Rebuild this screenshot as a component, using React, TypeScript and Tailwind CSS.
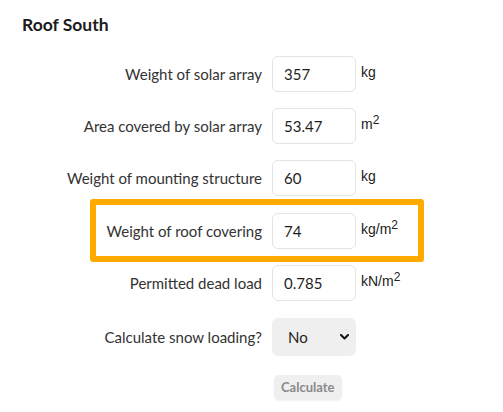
const font = { fontFamily: "Lato, 'Open Sans', sans-serif" }

interface RowProps {
    label: string
    value: string
    unit: JSX.Element | string
    labelWidth?: string
}

const Unit = ({ base, sup }: { base: string, sup?: string }) => {
    return (
        <span className="text-[14px] text-[#222] font-['Liberation_Sans',Arial,sans-serif] leading-none">
            {base}
            {sup && <sup className="text-[12px] relative -top-[5px]">{sup}</sup>}
        </span>
    )
}

const Row = ({ label, value, unit, labelWidth = "w-[240px]" }: RowProps) => {
    return (
        <div className="flex items-center">
            <label className={`${labelWidth} shrink-0 text-right text-[15px] text-[#333]`}>{label}</label>
            <input
                readOnly
                value={value}
                className="ml-[10px] w-[84px] h-[36px] rounded-[6px] border border-[#e3e3e3] bg-white px-[11px] text-[15px] text-[#1e1e1e] outline-none"
                style={font}
            />
            <div className="ml-[5px] -mt-[6px]">{unit}</div>
        </div>
    )
}

export default function App() {
    return (
        <div className="w-[503px] h-[412px] bg-white pl-[22px] overflow-hidden" style={font}>
            <h2 className="pt-[13px] text-[17.5px] leading-[24px] font-bold text-[#1b1b1b]">Roof South</h2>

            <div className="flex flex-col">
                <div className="mt-[19px]">
                    <Row label="Weight of solar array" value="357" unit={<Unit base="kg" />} />
                </div>
                <div className="mt-4">
                    <Row label="Area covered by solar array" value="53.47" unit={<Unit base="m" sup="2" />} />
                </div>
                <div className="mt-4">
                    <Row label="Weight of mounting structure" value="60" unit={<Unit base="kg" />} />
                </div>
                <div className="mt-[3px] ml-[68px] w-[334px] border-[6px] border-[#ffaa00] rounded-[3px] pt-[8px] pb-[7px]">
                    <Row label="Weight of roof covering" value="74" unit={<Unit base="kg/m" sup="2" />} labelWidth="w-[166px]" />
                </div>
                <div className="mt-[3px]">
                    <Row label="Permitted dead load" value="0.785" unit={<Unit base="kN/m" sup="2" />} />
                </div>
                <div className="mt-[17px] flex items-center">
                    <label className="w-[240px] shrink-0 text-right text-[15px] text-[#333]">Calculate snow loading?</label>
                    <div className="ml-[10px] w-[84px] h-[38px] rounded-[6px] bg-[#efefef] flex items-center justify-between pl-[16px] pr-[7px]">
                        <span className="text-[15px] text-[#1e1e1e]">No</span>
                        <svg width="9" height="6" viewBox="0 0 9 6">
                            <path d="M1 1 L4.5 4.5 L8 1" fill="none" stroke="#111" strokeWidth="2" strokeLinecap="round" strokeLinejoin="round" />
                        </svg>
                    </div>
                </div>
                <div className="mt-[18px] pl-[252px]">
                    <button className="h-[25px] px-[7px] rounded-[5px] bg-[#efefef] text-[13px] font-bold text-[#8a8a8a] shadow-[0_1px_2px_rgba(0,0,0,0.06)]">
                        Calculate
                    </button>
                </div>
            </div>
        </div>
    )
}
